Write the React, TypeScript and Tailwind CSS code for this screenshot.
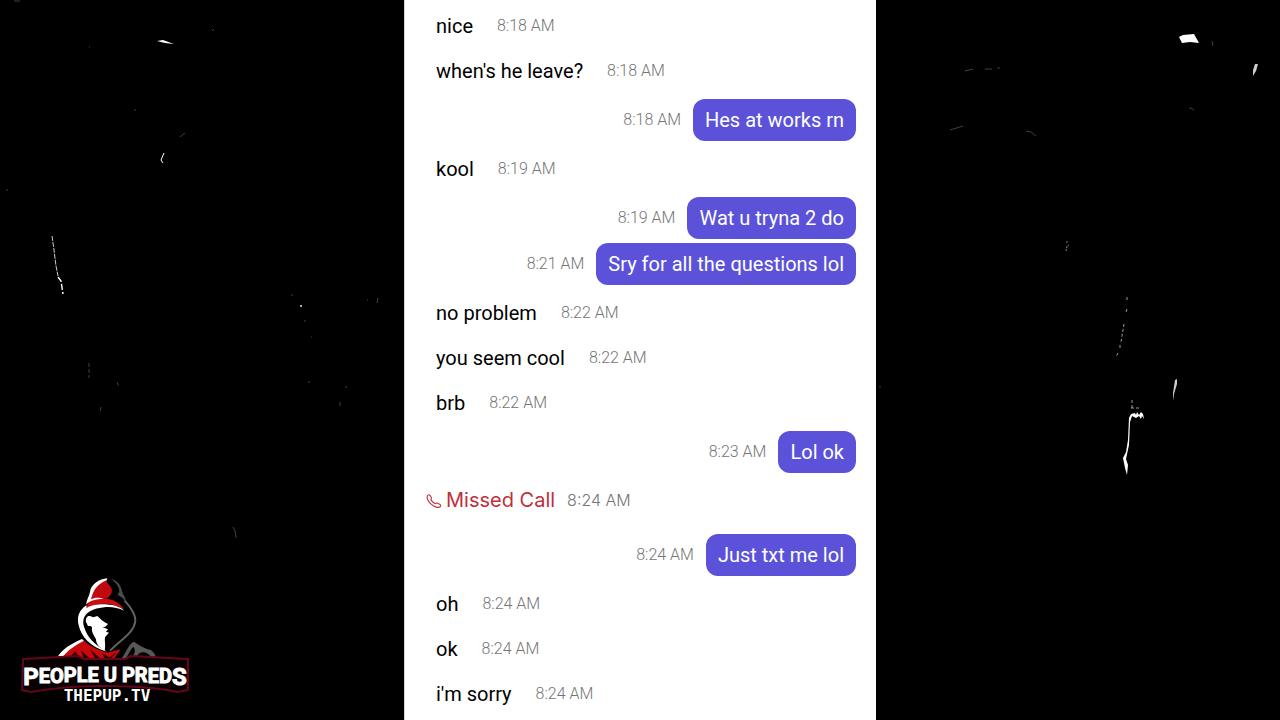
import { clsx } from 'clsx';

type Message = {
  text: string;
  time: string;
};

type Group = {
  from: 'them' | 'me' | 'call';
  messages: Message[];
};

const groups: Group[] = [
  {
    from: 'them',
    messages: [
      { text: 'nice', time: '8:18 AM' },
      { text: "when's he leave?", time: '8:18 AM' }
    ]
  },
  { from: 'me', messages: [{ text: 'Hes at works rn', time: '8:18 AM' }] },
  { from: 'them', messages: [{ text: 'kool', time: '8:19 AM' }] },
  {
    from: 'me',
    messages: [
      { text: 'Wat u tryna 2 do', time: '8:19 AM' },
      { text: 'Sry for all the questions lol', time: '8:21 AM' }
    ]
  },
  {
    from: 'them',
    messages: [
      { text: 'no problem', time: '8:22 AM' },
      { text: 'you seem cool', time: '8:22 AM' },
      { text: 'brb', time: '8:22 AM' }
    ]
  },
  { from: 'me', messages: [{ text: 'Lol ok', time: '8:23 AM' }] },
  { from: 'call', messages: [{ text: 'Missed Call', time: '8:24 AM' }] },
  { from: 'me', messages: [{ text: 'Just txt me lol', time: '8:24 AM' }] },
  {
    from: 'them',
    messages: [
      { text: 'oh', time: '8:24 AM' },
      { text: 'ok', time: '8:24 AM' },
      { text: "i'm sorry", time: '8:24 AM' }
    ]
  }
];

const PhoneIcon = () => (
  <svg viewBox="0 0 16 16" className="w-4 h-4 shrink-0" fill="none" stroke="#c4303a" strokeWidth="1.1" strokeLinejoin="round" aria-hidden="true">
    <path d="M1.4 4 C2 2.6 3.4 2.4 4.2 3.6 L5.4 5.8 C5.7 6.6 5.4 7.1 4.8 7.6 C5.8 9.2 7.6 10.9 9.6 11.7 C10.2 11 10.9 10.8 11.6 11.2 L14 12.4 C15 13 15 14 14.2 14.8 C12.4 16 8.6 15.2 5.4 12.4 C2.4 9.8 .6 6.4 1.4 4 Z" />
  </svg>
);

const Dust = () => (
  <svg viewBox="0 0 1280 720" preserveAspectRatio="xMidYMid slice" className="absolute inset-0 w-full h-full" fill="none" aria-hidden="true">
    <g fill="#fff">
      <path d="M157 41 L163 40 L174 44 L165 43 Z" />
      <path d="M1179 37 L1183 35 L1194 34 L1199 43 L1190 42 L1182 43 Z" />
      <path d="M1255 64 L1258 64 L1256 71 L1253 76 L1253 70 Z" opacity=".8" />
      <path d="M1175 380 L1177 379 L1177 384 L1174 394 L1173 401 L1173 393 Z" opacity=".8" />
      <path d="M1129 418 L1131 414 L1135 413 L1136 415 L1137 412 L1139 415 L1141 412 L1143 414 L1144 419 L1142 416 L1141 419 L1139 416 L1136 418 L1132 416 L1130 422 L1129 445 L1126 459 L1128 465 L1127 475 L1125 468 L1123 458 L1126 452 L1128 440 Z" />
    </g>
    <g stroke="#fff">
      <path d="M164 153 L161 160 L163 163" strokeWidth="1" />
      <path d="M52 236 L54 250 L56 266 L58 276" strokeDasharray="5 1" opacity=".8" />
      <path d="M58 277 L61 281 L63 294" strokeWidth="1.4" strokeDasharray="6 2" />
      <path d="M1127 297 V300 M1127 309 L1126 312 M1124 324 L1121 342 M1120 345 V348 M1118 353 L1116 357" strokeDasharray="3 2" opacity=".6" />
      <path d="M1132 400 V408 M1131 408 H1141" strokeDasharray="3 2" opacity=".6" />
      <path d="M1066 251 L1067 246 L1069 245 M1067 241 V244" strokeDasharray="2 1" opacity=".5" />
    </g>
    <g stroke="#fff" opacity=".25">
      <path d="M14 1 H20" />
      <path d="M180 137 L185 133 M212 31 L214 29 M89 47 H90 M134 110 H136 M6 190 H8" />
      <path d="M291 295 H293 M304 321 H306 M311 337 H312 M367 300 H368 M378 298 L377 303" />
      <path d="M89 363 V378 M117 382 L119 387 M101 407 L100 413 M308 382 H310 M345 387 H347 M340 402 V406" strokeDasharray="4 2" />
      <path d="M233 527 L235 531 L236 538" />
      <path d="M965 71 L973 69 M985 69 H992 M997 68 H1000 M950 130 L963 126 M1026 131 L1031 132 L1036 136" />
      <path d="M1212 41 L1213 46 M1189 108 H1191 L1194 110 M879 387 H881" />
    </g>
    <rect x="300" y="305" width="2" height="2" fill="#aaa" />
  </svg>
);

const Logo = () => (
  <svg viewBox="0 0 180 136" className="absolute bottom-2 left-4 w-[180px] h-[136px]" role="img" aria-label="People U Preds">
    <g transform="translate(-6 -6) scale(.3333)">
      {/* shoulders */}
      <path d="M146 266 C170 240 195 222 222 212 C240 228 265 240 292 248 L332 238 L312 266 Z" fill="#c9080d" />
      <path d="M176 266 L196 244 L210 266 Z M212 240 L240 266 H222 Z M240 238 L272 266 H256 Z M276 250 L298 262 L320 246 L300 270 H286 Z" fill="#2a0000" />
      <path d="M141 264 C156 236 184 222 216 207 L222 212 C196 226 172 240 156 264 Z" fill="#fff" />
      <path d="M336 264 C350 244 356 222 372 215 C388 226 404 236 422 240 C432 246 436 254 438 264 H426 C416 250 404 244 392 248 C384 252 380 258 376 264 H366 C374 250 378 240 370 230 C362 238 356 252 348 264 Z" fill="#575757" />
      {/* hood */}
      <path d="M240 92 C246 62 260 38 292 29 C282 38 306 44 306 62 C304 76 296 80 290 86 C270 84 254 88 240 92 Z" fill="#c00a10" />
      <path d="M230 108 C240 88 262 82 288 86 C312 88 330 100 342 118 C306 96 266 96 230 114 Z" fill="#cf0c12" />
      <path d="M292 25 C268 26 242 44 240 66 C238 78 230 88 228 104 C240 92 258 87 280 87 C264 81 252 84 243 88 C248 74 252 46 290 31 Z" fill="#fff" />
      <path d="M304 27 C330 34 334 54 338 70 C344 80 348 88 348 98 C342 84 330 78 322 74 C334 66 328 46 304 27 Z" fill="#4c4c4c" />
      <path d="M229 106 C206 122 200 142 206 166 C214 200 240 232 292 245 C258 228 232 204 222 170 C214 138 232 116 288 111 C308 110 326 114 342 122 C330 108 300 102 272 103 C252 104 240 108 230 114 Z" fill="#fff" />
      <path d="M344 92 C366 116 378 136 376 154 C370 190 336 206 300 242" fill="none" stroke="#626262" strokeWidth="6" />
      {/* face */}
      <path d="M228 156 C226 144 232 136 240 138 L250 142 L262 138 C270 146 280 156 294 162 L286 170 L278 172 L294 178 L288 185 L297 188 L286 200 C282 210 288 222 284 242 C270 236 258 222 258 208 C252 196 244 188 246 172 L242 168 L234 168 Z" fill="#fff" />
    </g>
    {/* wordmark */}
    <path d="M7 83 L62 80 L68 83 H109 L115 80 L172 83 V114 L162 116 C122 108 57 108 15 116 L6 114 Z" fill="#090002" stroke="#65051a" strokeWidth="2" strokeLinejoin="round" />
    <text
      textAnchor="middle"
      x="89"
      y="109"
      fill="#fff"
      stroke="#fff"
      strokeWidth="1"
      fontWeight="700"
      className="font-['Roboto',sans-serif]"
    >
      <tspan fontSize="24">P</tspan>
      <tspan fontSize="20" dy="-2">EO</tspan>
      <tspan fontSize="20" dy="-1">PLE U PR</tspan>
      <tspan fontSize="20" dy="1">ED</tspan>
      <tspan fontSize="24" dy="2">S</tspan>
    </text>
    <text x="91" y="125" textAnchor="middle" fill="#fff" fontSize="16" fontWeight="700" className="font-['DejaVu_Sans_Mono',monospace]">
      THEPUP.TV
    </text>
  </svg>
);

const Row = ({ from, message }: { from: Group['from']; message: Message }) => {
  const time = <time className="text-base font-light text-[#757575] whitespace-nowrap">{message.time}</time>;

  if (from === 'me') {
    return (
      <li className="flex items-center justify-end gap-3 h-[42px]">
        {time}
        <p className="h-full px-3 rounded-xl bg-[#5b52d9] text-white leading-[42px]">{message.text}</p>
      </li>
    );
  }

  if (from === 'call') {
    return (
      <li className="flex items-center h-10 pl-[2px] font-['Inter',sans-serif]">
        <PhoneIcon />
        <p className="ml-1 mr-3 text-[#bf2f39]">{message.text}</p>
        {time}
      </li>
    );
  }

  return (
    <li className="flex items-center gap-6 h-[42px] pl-3">
      <p className="text-black">{message.text}</p>
      {time}
    </li>
  );
};

const App: React.FC = () => {
  return (
    <div className="relative min-h-screen bg-black overflow-hidden">
      <Dust />
      <main className="relative mx-auto w-full max-w-[472px] min-h-screen pl-[19px] pr-5 py-[5px] bg-white border-l border-gray-300 text-xl font-['Roboto',sans-serif]">
        <div className="flex flex-col gap-[7px]">
          {groups.map((group, i) => (
            <ul
              key={i}
              className={clsx('flex flex-col', group.from === 'me' ? 'gap-1' : 'gap-[3px]', group.from === 'call' && 'mb-[7px]')}
            >
              {group.messages.map((message) => (
                <Row key={message.text} from={group.from} message={message} />
              ))}
            </ul>
          ))}
        </div>
      </main>
      <Logo />
    </div>
  );
};

export default App;
